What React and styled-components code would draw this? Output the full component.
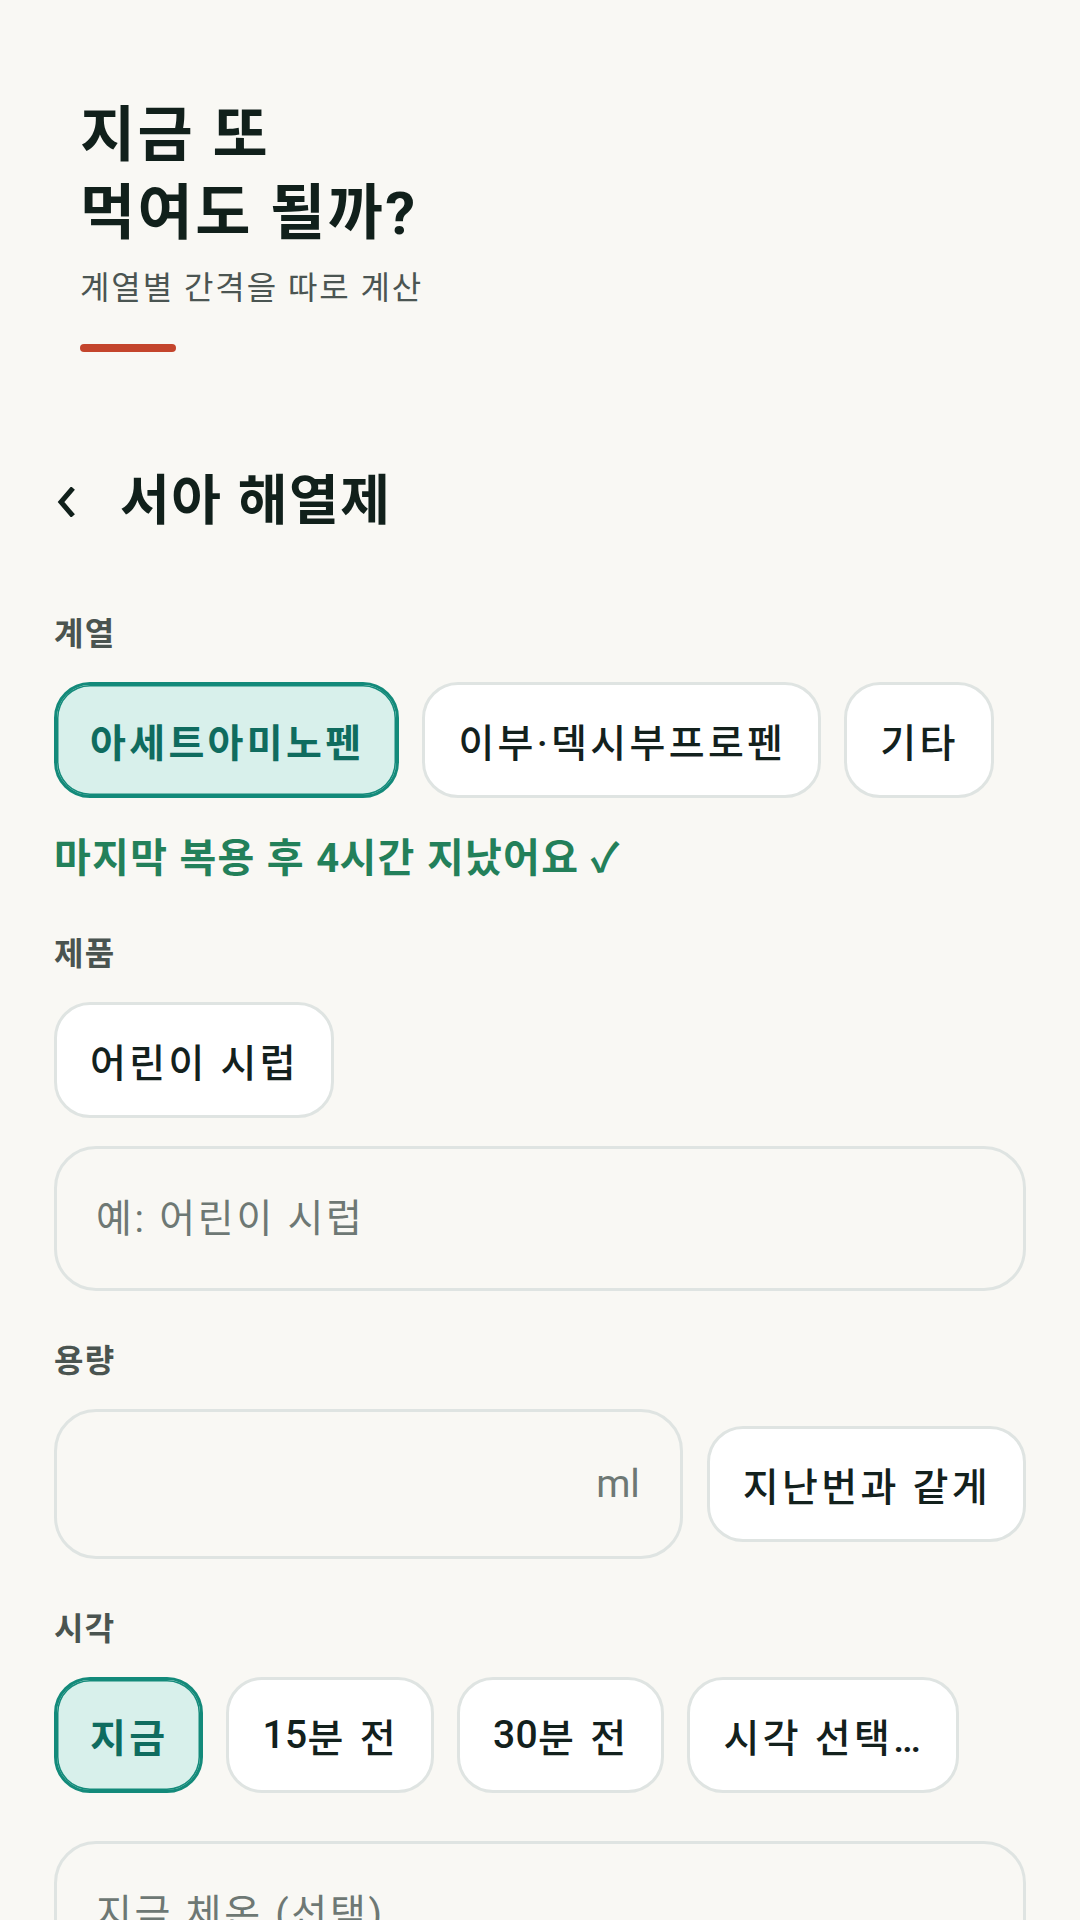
import styled, { createGlobalStyle } from "styled-components";
import { useState } from "react";

const FAMILIES = ["아세트아미노펜", "이부·덱시부프로펜", "기타"];
const TIMES = [
  { id: "now", text: "지금" },
  { id: "15", num: "15", text: "분 전" },
  { id: "30", num: "30", text: "분 전" },
  { id: "pick", text: "시각 선택…" },
];

export default function App() {
  const [family, setFamily] = useState(FAMILIES[0]);
  const [time, setTime] = useState("now");
  const [product, setProduct] = useState("");
  const [dose, setDose] = useState("");

  return (
    <>
      <GlobalStyle />
      <Page>
        <Hero>
          <Title>
            지금 또
            <br />
            먹여도 될까?
          </Title>
          <Subtitle>계열별 간격을 따로 계산</Subtitle>
          <Accent />
        </Hero>

        <Main>
          <TopBar>
            <BackButton aria-label="뒤로">
              <svg width="18" height="30" viewBox="0 0 18 30">
                <polyline
                  points="16,1 4,15 16,29"
                  fill="none"
                  stroke="currentColor"
                  strokeWidth="5"
                  strokeLinejoin="miter"
                />
              </svg>
            </BackButton>
            <PageTitle>서아 해열제</PageTitle>
          </TopBar>

          <Field>
            <Label>계열</Label>
            <ChipRow>
              {FAMILIES.map((f) => (
                <Chip key={f} $active={family === f} onClick={() => setFamily(f)}>
                  {f}
                </Chip>
              ))}
            </ChipRow>
          </Field>
          <Status>
            마지막 복용 후 <Num>4</Num>시간 지났어요 ✓
          </Status>

          <Field>
            <Label>제품</Label>
            <ChipRow>
              <Chip onClick={() => setProduct("어린이 시럽")}>어린이 시럽</Chip>
            </ChipRow>
            <TextInput
              $gap
              placeholder="예: 어린이 시럽"
              value={product}
              onChange={(e) => setProduct(e.target.value)}
            />
          </Field>

          <Field>
            <Label>용량</Label>
            <DoseRow>
              <DoseBox>
                <DoseInput
                  inputMode="decimal"
                  value={dose}
                  onChange={(e) => setDose(e.target.value)}
                />
                <Unit>ml</Unit>
              </DoseBox>
              <Chip onClick={() => setDose("5")}>지난번과 같게</Chip>
            </DoseRow>
          </Field>

          <Field>
            <Label>시각</Label>
            <ChipRow>
              {TIMES.map((t) => (
                <Chip key={t.id} $active={time === t.id} onClick={() => setTime(t.id)}>
                  {t.num && <Num>{t.num}</Num>}
                  {t.text}
                </Chip>
              ))}
            </ChipRow>
          </Field>

          <Field>
            <TextInput placeholder="지금 체온 (선택)" />
          </Field>
        </Main>
      </Page>
    </>
  );
}

const GlobalStyle = createGlobalStyle`
  * {
    box-sizing: border-box;
  }

  html,
  body {
    margin: 0;
    background: #f9f8f4;
  }

  body {
    font-family: Roboto, "Noto Sans CJK KR", sans-serif;
    letter-spacing: 0.08em;
    color: #13211d;
  }
`;

const Page = styled.div`
  min-height: 100vh;
  padding-bottom: 80px;
`;

const Hero = styled.header`
  padding: 97px 80px 0;
`;

const Title = styled.h1`
  margin: 0;
  font-size: 60px;
  font-weight: 700;
  line-height: 78px;
  letter-spacing: 0.04em;
  color: #11201b;
`;

const Subtitle = styled.p`
  margin: 13px 0 0;
  font-size: 32px;
  line-height: 45px;
  letter-spacing: 0.06em;
  color: #4b5552;
`;

const Accent = styled.div`
  margin-top: 33px;
  width: 96px;
  height: 8px;
  border-radius: 4px;
  background: #c4452c;
`;

const Main = styled.main`
  padding: 0 54px;
`;

const TopBar = styled.div`
  display: flex;
  align-items: center;
  margin-top: 115px;
  height: 70px;
`;

const BackButton = styled.button`
  display: flex;
  align-items: center;
  width: 48px;
  height: 70px;
  padding: 0 0 0 3px;
  border: none;
  background: none;
  color: #11201b;
  cursor: pointer;
`;

const PageTitle = styled.h2`
  margin: 0 0 0 18px;
  font-size: 54px;
  font-weight: 700;
  line-height: 70px;
  letter-spacing: 0.03em;
  color: #11201b;
`;

const Num = styled.span`
  letter-spacing: 0.01em;
`;

const Status = styled.p`
  margin: 33px 0 0;
  font-size: 40px;
  font-weight: 700;
  line-height: 55px;
  color: #23805a;
`;

const Field = styled.section`
  margin-top: 48px;

  ${TopBar} + & {
    margin-top: 75px;
  }

  ${Status} + & {
    margin-top: 46px;
  }
`;

const Label = styled.div`
  margin-bottom: 25px;
  font-size: 32px;
  font-weight: 700;
  line-height: 45px;
  color: #4a5450;
`;

const ChipRow = styled.div`
  display: flex;
  flex-wrap: wrap;
  gap: 23px;
`;

const Chip = styled.button`
  flex-shrink: 0;
  display: inline-flex;
  align-items: center;
  white-space: pre;
  height: 116px;
  padding: 0 32px 0 33px;
  border: 3px solid ${(p) => (p.$active ? "#138a7a" : "#dfe4e2")};
  border-radius: 36px;
  box-shadow: ${(p) => (p.$active ? "inset 0 0 0 1.5px #138a7a" : "none")};
  background: ${(p) => (p.$active ? "#d8f0eb" : "#fff")};
  font-family: inherit;
  font-size: 39px;
  font-weight: ${(p) => (p.$active ? 700 : 500)};
  letter-spacing: 0.085em;
  color: ${(p) => (p.$active ? "#0f6c5f" : "#13211d")};
  cursor: pointer;
`;

const TextInput = styled.input`
  display: block;
  width: 100%;
  height: 145px;
  margin-top: ${(p) => (p.$gap ? "28px" : "0")};
  padding: 0 39px;
  border: 3px solid #dfe4e2;
  border-radius: 42px;
  background: transparent;
  font-family: inherit;
  font-size: 39px;
  letter-spacing: 0.07em;
  color: #13211d;
  outline: none;

  &::placeholder {
    color: #6e7874;
  }
`;

const DoseRow = styled.div`
  display: flex;
  align-items: center;
  gap: 24px;
`;

const DoseBox = styled.label`
  flex: 1;
  min-width: 0;
  display: flex;
  align-items: center;
  height: 150px;
  padding: 0 40px 0 39px;
  border: 3px solid #dfe4e2;
  border-radius: 42px;
`;

const DoseInput = styled.input`
  flex: 1;
  min-width: 0;
  border: none;
  background: transparent;
  text-align: right;
  font-family: inherit;
  font-size: 39px;
  color: #13211d;
  outline: none;
`;

const Unit = styled.span`
  margin-left: 10px;
  font-size: 39px;
  letter-spacing: 0;
  color: #6e7874;
`;
